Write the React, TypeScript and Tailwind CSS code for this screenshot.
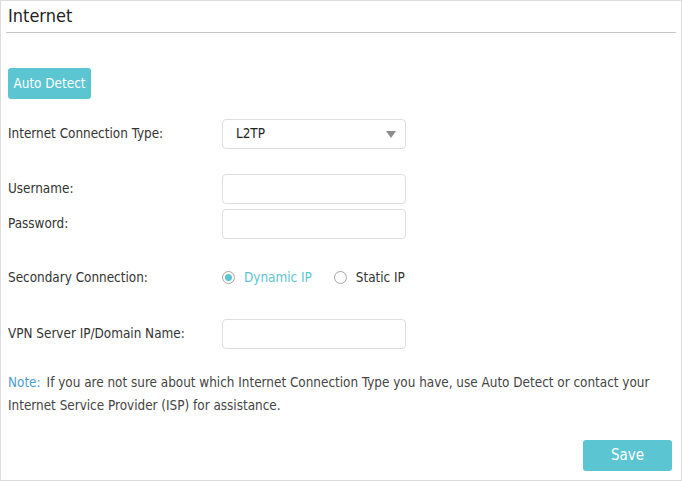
import { useState } from "react";

const font = { fontFamily: "'DejaVu Sans Condensed', 'DejaVu Sans', sans-serif" };

const TextField = () => (
  <input
    type="text"
    className="w-[184px] h-[30px] rounded-[4px] border border-[#dedede] bg-white px-3 text-[13px] outline-none"
  />
);

const Radio = ({ checked, label, onClick }: { checked: boolean; label: string; onClick: () => void }) => (
  <button type="button" onClick={onClick} className="flex items-center">
    <span className="flex h-[13px] w-[13px] items-center justify-center rounded-full border border-[#a5a5a5] bg-white">
      {checked && <span className="h-[7px] w-[7px] rounded-full bg-[#5bc5d1]" />}
    </span>
    <span className={`ml-[9px] text-[13.4px] ${checked ? "text-[#5bc5d1]" : "text-[#333333]"}`}>{label}</span>
  </button>
);

export default function App() {
  const [secondary, setSecondary] = useState("dynamic");

  return (
    <div className="h-[481px] w-[682px] border border-[#dcdcdc] bg-white text-[#333333]" style={font}>
      <div className="mx-[5px] border-b border-[#c6c6c6] pt-[3px] pb-[4px] pl-[2px]">
        <h1 className="text-[18px] leading-[24px] text-[#222222]">Internet</h1>
      </div>

      <div className="pl-[7px] pr-[8px]">
        <button className="mt-[35px] h-[31px] w-[83px] rounded-[3px] bg-[#5bc5d1] pt-[1px] text-[13.4px] text-white">
          Auto Detect
        </button>

        <div className="mt-[20px] flex h-[30px] items-center">
          <span className="w-[214px] text-[13.4px]">Internet Connection Type:</span>
          <div className="flex h-[30px] w-[184px] items-center justify-between rounded-[4px] border border-[#dedede] pl-[13px] pr-[9px]">
            <span className="text-[13.4px] text-[#222222]">L2TP</span>
            <span className="h-0 w-0 border-x-[5px] border-t-[7px] border-x-transparent border-t-[#8c8c8c]" />
          </div>
        </div>

        <div className="mt-[25px] flex h-[30px] items-center">
          <span className="w-[214px] text-[13.4px]">Username:</span>
          <TextField />
        </div>
        <div className="mt-[5px] flex h-[30px] items-center">
          <span className="w-[214px] text-[13.4px]">Password:</span>
          <TextField />
        </div>

        <div className="mt-[24px] flex h-[30px] items-center">
          <span className="w-[214px] text-[13.4px]">Secondary Connection:</span>
          <Radio checked={secondary === "dynamic"} label="Dynamic IP" onClick={() => setSecondary("dynamic")} />
          <div className="ml-[22px]">
            <Radio checked={secondary === "static"} label="Static IP" onClick={() => setSecondary("static")} />
          </div>
        </div>

        <div className="mt-[26px] flex h-[30px] items-center">
          <span className="w-[214px] text-[13.4px]">VPN Server IP/Domain Name:</span>
          <TextField />
        </div>

        <div className="mt-[22px] text-[13.4px] leading-[23px] text-[#444444]">
          <div className="flex">
            <span className="mr-[6px] text-[#4aa0cf]">Note:</span>
            <span>If you are not sure about which Internet Connection Type you have, use Auto Detect or contact your</span>
          </div>
          <div>Internet Service Provider (ISP) for assistance.</div>
        </div>

        <div className="mt-[23px] flex justify-end pr-[1px]">
          <button className="h-[31px] w-[89px] rounded-[3px] bg-[#5bc5d1] text-[15px] text-white">Save</button>
        </div>
      </div>
    </div>
  );
}
